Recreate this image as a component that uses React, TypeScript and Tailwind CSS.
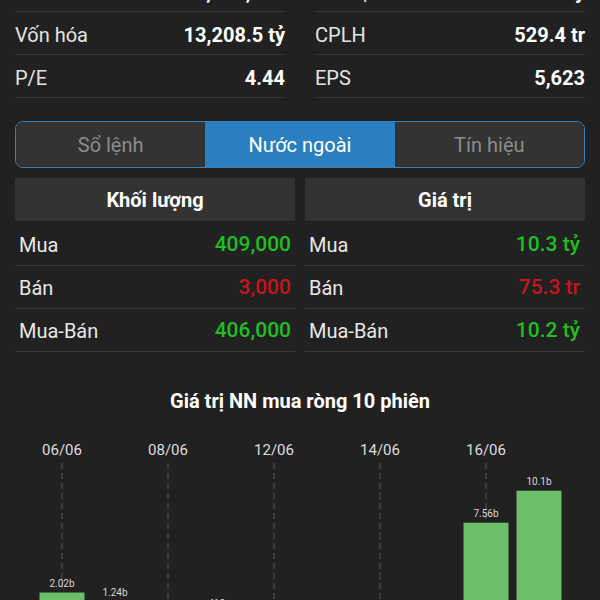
import type { ReactNode } from 'react'

const STATS: [string, string, string, string][] = [
  ['KLGD', '1,540,300', 'Giá trị', '20.7 tỷ'],
  ['Vốn hóa', '13,208.5 tỷ', 'CPLH', '529.4 tr'],
  ['P/E', '4.44', 'EPS', '5,623'],
]

const FOREIGN = [
  { label: 'Mua', vol: '409,000', val: '10.3 tỷ', up: true },
  { label: 'Bán', vol: '3,000', val: '75.3 tr', up: false },
  { label: 'Mua-Bán', vol: '406,000', val: '10.2 tỷ', up: true },
]

const BARS = [
  { date: '06/06', v: 2.02, t: '2.02b' },
  { date: '', v: 1.24, t: '1.24b' },
  { date: '08/06', v: 0.12, t: '' },
  { date: '', v: 0.41, t: '410m' },
  { date: '12/06', v: 0.08, t: '' },
  { date: '', v: 0.2, t: '200m' },
  { date: '14/06', v: 0.05, t: '' },
  { date: '', v: 0.3, t: '300m' },
  { date: '16/06', v: 7.56, t: '7.56b' },
  { date: '', v: 10.1, t: '10.1b' },
]

function StatCell({ label, value }: { label: string; value: string }) {
  return (
    <div className="flex h-[43px] items-center justify-between border-b border-[#383838] pt-[3px]">
      <span className="text-[#e4e4e4]">{label}</span>
      <span className="font-bold text-white">{value}</span>
    </div>
  )
}

function Header({ children }: { children: ReactNode }) {
  return (
    <div className="flex h-[43px] items-center justify-center bg-[#333333] font-bold text-white">
      {children}
    </div>
  )
}

function Chart() {
  const base = 188
  const k = 12.6
  return (
    <svg width="600" height="200" viewBox="0 0 600 200" className="block">
      {BARS.map((b, i) => {
        const cx = 62 + i * 53
        const h = b.v * k
        return (
          <g key={i}>
            {b.date && (
              <>
                <text x={cx} y={25} textAnchor="middle" fontSize="15" fill="#dddddd">
                  {b.date}
                </text>
                <line x1={cx} y1={33} x2={cx} y2={base} stroke="#5a5a5a" strokeDasharray="6 4" />
              </>
            )}
            <rect x={cx - 22.5} y={base - h} width={45} height={h} fill="#6cbf69" />
            {b.t && (
              <text x={cx} y={base - h - 6} textAnchor="middle" fontSize="10" fill="#d8d8d8">
                {b.t}
              </text>
            )}
          </g>
        )
      })}
    </svg>
  )
}

export default function App() {
  return (
    <div
      className="h-[600px] w-[600px] overflow-hidden bg-[#212121] text-[20px]"
      style={{ fontFamily: 'Roboto, "Noto Sans", sans-serif' }}
    >
      <div className="-mt-[31px] grid grid-cols-2 gap-x-[30px] px-[15px]">
        {STATS.map(([l1, v1, l2, v2]) => (
          <div key={l1} className="contents">
            <StatCell label={l1} value={v1} />
            <StatCell label={l2} value={v2} />
          </div>
        ))}
      </div>

      <div className="mx-[15px] mt-[23px] flex h-[47px] overflow-hidden rounded-lg border-[1.5px] border-[#3c80b8]">
        <div className="flex flex-1 items-center justify-center bg-[#333333] text-[#8c8c8c]">Sổ lệnh</div>
        <div className="flex flex-1 items-center justify-center bg-[#2b7fc0] text-white">Nước ngoài</div>
        <div className="flex flex-1 items-center justify-center bg-[#333333] text-[#8c8c8c]">Tín hiệu</div>
      </div>

      <div className="mt-[10px] grid grid-cols-2 gap-x-[10px] px-[15px]">
        <Header>Khối lượng</Header>
        <Header>Giá trị</Header>
        <div className="mt-[2px]">
          {FOREIGN.map((r) => (
            <div key={r.label} className="flex h-[43px] items-center justify-between border-b border-[#383838] pl-1 pr-[4px] pt-[2px]">
              <span className="text-[#e8e8e8]">{r.label}</span>
              <span className={`text-[21px] font-medium ${r.up ? 'text-[#1fbf1f]' : 'text-[#c4161c]'}`}>{r.vol}</span>
            </div>
          ))}
        </div>
        <div className="mt-[2px]">
          {FOREIGN.map((r) => (
            <div key={r.label} className="flex h-[43px] items-center justify-between border-b border-[#383838] pl-1 pr-[5px] pt-[2px]">
              <span className="text-[#e8e8e8]">{r.label}</span>
              <span className={`text-[21px] font-medium ${r.up ? 'text-[#1fbf1f]' : 'text-[#c4161c]'}`}>{r.val}</span>
            </div>
          ))}
        </div>
      </div>

      <div className="mt-[37px] text-center text-[20px] font-bold leading-6 text-white">
        Giá trị NN mua ròng 10 phiên
      </div>
      <div className="mt-[17px]">
        <Chart />
      </div>
    </div>
  )
}
